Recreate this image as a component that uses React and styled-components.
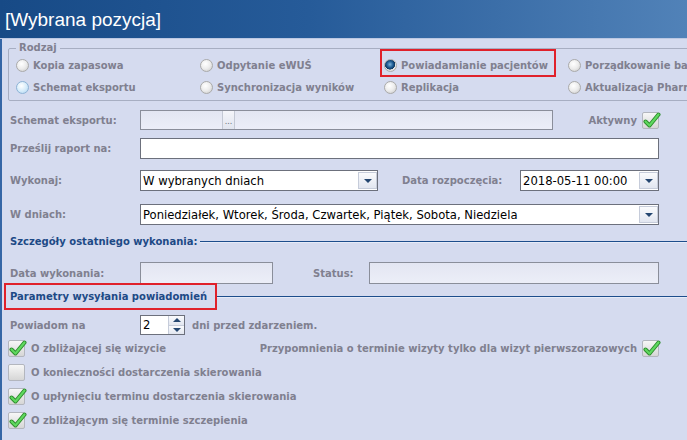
import React from 'react';
import styled, { createGlobalStyle, css } from 'styled-components';

const GlobalStyle = createGlobalStyle`
  *, *::before, *::after { box-sizing: border-box; }
  html, body { margin: 0; padding: 0; }
  body {
    width: 687px;
    height: 440px;
    overflow: hidden;
    background: #d5dbef;
    font-family: "DejaVu Sans", Verdana, sans-serif;
  }
`;

const Window = styled.div`
  width: 687px;
  height: 440px;
  overflow: hidden;
  display: flex;
  flex-direction: column;
  background: #d5dbef;
`;

const Header = styled.header`
  flex: none;
  height: 39px;
  display: flex;
  align-items: center;
  padding: 2px 0 0 5px;
  background: linear-gradient(to right, #174a86 0%, #265b99 45%, #5182b8 100%);
  border-bottom: 1px solid #bcc8e2;
`;

const Title = styled.h1`
  margin: 0;
  font-family: "Liberation Sans", Arial, sans-serif;
  font-weight: normal;
  font-size: 19px;
  color: #fff;
`;

const Body = styled.main`
  flex: 1;
  display: flex;
  flex-direction: column;
  padding: 3px 28px 0 6px;
  border-left: 2px solid #3566a6;
`;

const GroupBox = styled.fieldset`
  margin: 0 -220px 0 0;
  padding: 0 0 2px 7px;
  min-width: 0;
  border: 1px solid #a7aec2;
  border-radius: 2px;
`;

const Legend = styled.legend`
  padding: 0 3px;
  line-height: 12px;
  font-size: 10px;
  font-weight: bold;
  color: #80808f;
`;

const RadioGrid = styled.div`
  display: grid;
  grid-template-columns: repeat(4, 184px);
  grid-auto-rows: 22px;
  align-items: center;
`;

const RadioItem = styled.label`
  position: relative;
  justify-self: start;
  display: inline-flex;
  align-items: center;
  gap: 4px;
  height: 18px;
  padding-right: 4px;
  font-size: 10px;
  font-weight: bold;
  color: #80808f;
  white-space: nowrap;

  ${p => p.$marked && css`
    &::after {
      content: '';
      position: absolute;
      inset: -7px -4px -3px -4px;
      border: 2px solid #e0212b;
    }
  `}
`;

const RadioDot = styled.span`
  flex: none;
  width: 13px;
  height: 13px;
  border-radius: 50%;
  border: 1px solid ${p => (p.$hover ? '#8db3d6' : '#aaaaaa')};
  background: ${p =>
    p.$checked
      ? 'radial-gradient(circle at 45% 40%, #7fb3d9 0, #1d5b93 35%, #0f3760 55%, #e6e6e6 60%, #cfcfcf 100%)'
      : p.$hover
      ? 'radial-gradient(circle at 40% 35%, #ffffff 0, #d4ebfa 55%, #a9cfee 100%)'
      : 'radial-gradient(circle at 40% 35%, #ffffff 0, #ececec 50%, #c6c6c6 100%)'};
`;

const Row = styled.div`
  display: flex;
  align-items: center;
  flex: none;
  height: ${p => p.$h}px;
  margin-top: ${p => p.$mt}px;
`;

const FieldLabel = styled.span`
  flex: none;
  width: ${p => (p.$auto ? 'auto' : '132px')};
  margin-left: ${p => p.$ml ?? 0}px;
  padding-left: ${p => (p.$auto ? 0 : 2)}px;
  font-size: 10px;
  font-weight: bold;
  color: #80808f;
  white-space: nowrap;
`;

const TextBox = styled.div`
  display: flex;
  align-items: center;
  flex: ${p => (p.$w ? 'none' : '1')};
  width: ${p => (p.$w ? `${p.$w}px` : 'auto')};
  height: ${p => p.$h ?? 21}px;
  margin-left: ${p => (p.$push ? 'auto' : '0')};
  padding-left: 2px;
  border: 1px solid ${p => (p.$disabled ? '#8a8e9a' : '#6c707c')};
  background: ${p => (p.$disabled ? 'linear-gradient(#e3e6f2, #eceef8)' : '#ffffff')};
  font-size: 11.6px;
  color: #000;
  white-space: nowrap;
  overflow: hidden;
`;

const EllipsisButton = styled.span`
  align-self: stretch;
  width: 13px;
  margin-left: 79px;
  display: flex;
  align-items: flex-end;
  justify-content: center;
  padding-bottom: 3px;
  background: linear-gradient(#f4f5fa, #e1e5ef);
  border-left: 1px solid #c3c8d4;
  border-right: 1px solid #c3c8d4;
  font-size: 8px;
  color: #6a6a7a;
`;

const DropButton = styled.span`
  flex: none;
  align-self: stretch;
  width: 19px;
  margin: 1px 0 1px auto;
  display: flex;
  align-items: center;
  justify-content: center;
  background: linear-gradient(#fafbfd, #e2e6f0);
  border: 1px solid #c6ccda;

  &::after {
    content: '';
    border-left: 4px solid transparent;
    border-right: 4px solid transparent;
    border-top: 4px solid #244670;
  }
`;

const SpinButtons = styled.span`
  flex: none;
  align-self: stretch;
  width: 16px;
  margin-left: auto;
  display: flex;
  flex-direction: column;
  border-left: 1px solid #c6ccda;
`;

const SpinHalf = styled.span`
  flex: 1;
  display: flex;
  align-items: center;
  justify-content: center;
  background: linear-gradient(#fafbfd, #e2e6f0);
  border-bottom: ${p => (p.$up ? '1px solid #c6ccda' : 'none')};

  &::after {
    content: '';
    border-left: 4px solid transparent;
    border-right: 4px solid transparent;
    ${p => (p.$up ? 'border-bottom: 4px solid #244670;' : 'border-top: 4px solid #244670;')}
  }
`;

const Section = styled.div`
  display: flex;
  align-items: center;
  flex: none;
  height: ${p => p.$h}px;
  margin: ${p => p.$mt}px -28px 0 0;

  &::after {
    content: '';
    flex: 1;
    height: 1px;
    background: #1d4d8c;
    box-shadow: 0 1px 0 #e6ebf8;
  }
`;

const SectionTitle = styled.span`
  padding: 0 3px 0 2px;
  font-size: 10px;
  font-weight: bold;
  color: #1d4a86;
  white-space: nowrap;

  ${p => p.$marked && css`
    align-self: stretch;
    display: flex;
    align-items: center;
    margin-left: -4px;
    padding: 0 8px 0 4px;
    border: 2px solid #e0212b;
  `}
`;

const Box = styled.span`
  position: relative;
  flex: none;
  width: 17px;
  height: 17px;
  margin-left: ${p => p.$ml ?? 0}px;
  border: 1px solid #b3b6be;
  border-radius: 2px;
  background: linear-gradient(#f7f7f7, #d6d6d6);

  svg {
    position: absolute;
    left: 0;
    top: -2px;
  }
`;

const CheckLabel = styled.span`
  margin-left: ${p => (p.$push ? 'auto' : '6px')};
  font-size: 10px;
  font-weight: bold;
  color: #80808f;
  white-space: nowrap;
`;

const CheckBox = ({ checked, ml }) => (
  <Box $ml={ml}>
    {checked && (
      <svg width="18" height="18" viewBox="0 0 18 18">
        <path d="M2.5 10.5 L6.5 14.5 L15.5 3.5" fill="none" stroke="#2b8a2b" strokeWidth="4" strokeLinecap="round" strokeLinejoin="round" />
        <path d="M2.5 10.5 L6.5 14.5 L15.5 3.5" fill="none" stroke="#5fd85f" strokeWidth="2.2" strokeLinecap="round" strokeLinejoin="round" />
      </svg>
    )}
  </Box>
);

const Select = ({ w, push, children }) => (
  <TextBox $w={w} $push={push}>
    {children}
    <DropButton />
  </TextBox>
);

const radios = [
  { label: 'Kopia zapasowa' },
  { label: 'Odpytanie eWUŚ' },
  { label: 'Powiadamianie pacjentów', checked: true, marked: true },
  { label: 'Porządkowanie bazy danych' },
  { label: 'Schemat eksportu', hover: true },
  { label: 'Synchronizacja wyników' },
  { label: 'Replikacja' },
  { label: 'Aktualizacja Pharmindex' },
];

export default function App() {
  return (
    <Window>
      <GlobalStyle />
      <Header>
        <Title>[Wybrana pozycja]</Title>
      </Header>
      <Body>
        <GroupBox>
          <Legend>Rodzaj</Legend>
          <RadioGrid>
            {radios.map(r => (
              <RadioItem key={r.label} $marked={r.marked}>
                <RadioDot $checked={r.checked} $hover={r.hover} />
                {r.label}
              </RadioItem>
            ))}
          </RadioGrid>
        </GroupBox>

        <Row $h={20} $mt={9}>
          <FieldLabel>Schemat eksportu:</FieldLabel>
          <TextBox $w={413} $h={20} $disabled>
            <EllipsisButton>...</EllipsisButton>
          </TextBox>
          <CheckLabel $push>Aktywny</CheckLabel>
          <CheckBox checked ml={5} />
        </Row>

        <Row $h={21} $mt={8}>
          <FieldLabel>Prześlij raport na:</FieldLabel>
          <TextBox />
        </Row>

        <Row $h={21} $mt={11}>
          <FieldLabel>Wykonaj:</FieldLabel>
          <Select w={238}>W wybranych dniach</Select>
          <FieldLabel $auto $ml={24}>Data rozpoczęcia:</FieldLabel>
          <Select w={139} push>2018-05-11 00:00</Select>
        </Row>

        <Row $h={21} $mt={13}>
          <FieldLabel>W dniach:</FieldLabel>
          <Select>Poniedziałek, Wtorek, Środa, Czwartek, Piątek, Sobota, Niedziela</Select>
        </Row>

        <Section $h={14} $mt={9}>
          <SectionTitle>Szczegóły ostatniego wykonania:</SectionTitle>
        </Section>

        <Row $h={22} $mt={14}>
          <FieldLabel>Data wykonania:</FieldLabel>
          <TextBox $w={133} $h={22} $disabled />
          <FieldLabel $auto $ml={40}>Status:</FieldLabel>
          <TextBox $w={290} $h={22} $push $disabled />
        </Row>

        <Section $h={27} $mt={-1}>
          <SectionTitle $marked>Parametry wysyłania powiadomień</SectionTitle>
        </Section>

        <Row $h={20} $mt={5}>
          <FieldLabel>Powiadom na</FieldLabel>
          <TextBox $w={45} $h={20}>
            2
            <SpinButtons>
              <SpinHalf $up />
              <SpinHalf />
            </SpinButtons>
          </TextBox>
          <FieldLabel $auto $ml={7}>dni przed zdarzeniem.</FieldLabel>
        </Row>

        <Row $h={24} $mt={1}>
          <CheckBox checked />
          <CheckLabel>O zbliżającej się wizycie</CheckLabel>
          <CheckLabel $push>Przypomnienia o terminie wizyty tylko dla wizyt pierwszorazowych</CheckLabel>
          <CheckBox checked ml={5} />
        </Row>
        <Row $h={24} $mt={0}>
          <CheckBox />
          <CheckLabel>O konieczności dostarczenia skierowania</CheckLabel>
        </Row>
        <Row $h={24} $mt={0}>
          <CheckBox checked />
          <CheckLabel>O upłynięciu terminu dostarczenia skierowania</CheckLabel>
        </Row>
        <Row $h={24} $mt={0}>
          <CheckBox checked />
          <CheckLabel>O zbliżającym się terminie szczepienia</CheckLabel>
        </Row>
      </Body>
    </Window>
  );
}
